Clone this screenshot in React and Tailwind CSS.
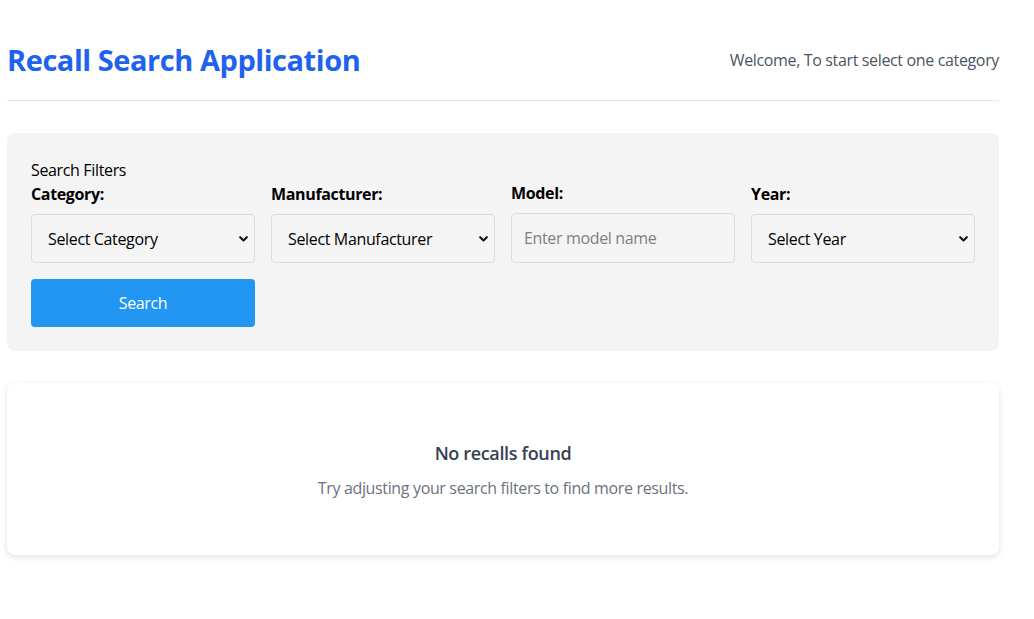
import { useState } from "react";

const Chevron = () => (
  <svg
    className="pointer-events-none absolute right-[7px] top-1/2 -translate-y-1/2"
    width="9"
    height="6"
    viewBox="0 0 9 6"
    fill="none"
  >
    <path d="M1.2 1.2L4.5 4.5L7.8 1.2" stroke="#111" strokeWidth="2.1" strokeLinecap="round" strokeLinejoin="round" />
  </svg>
);

const SelectField = ({ label, placeholder, options = [], value, onChange }) => (
  <div className="flex flex-col">
    <label className="font-bold text-base leading-6 text-black">{label}</label>
    <div className="relative mt-2">
      <select
        value={value}
        onChange={(e) => onChange(e.target.value)}
        className="w-full h-[49px] appearance-none rounded border border-[#dcdcdc] bg-[#f4f4f4] pl-4 pr-8 text-base tracking-[-0.35px] text-black outline-none"
      >
        <option value="">{placeholder}</option>
        {options.map((o) => (
          <option key={o} value={o}>{o}</option>
        ))}
      </select>
      <Chevron />
    </div>
  </div>
);

export default function App() {
  const [category, setCategory] = useState("");
  const [manufacturer, setManufacturer] = useState("");
  const [model, setModel] = useState("");
  const [year, setYear] = useState("");

  return (
    <div
      className="min-h-screen bg-white pl-[7px] text-black tracking-[-0.35px]"
      style={{ fontFamily: '"Open Sans", "Noto Sans", Arial, sans-serif' }}
    >
      <div className="w-[992px]">
        {/* header */}
        <header className="mt-5 flex items-center justify-between border-b border-[#e5e5e5] py-[22px]">
          <h1 className="text-[29px] leading-9 font-bold tracking-[-0.45px] text-[#1f62ee]">Recall Search Application</h1>
          <span className="text-base text-[#4b5563]">Welcome, To start select one category</span>
        </header>

        {/* filters */}
        <section className="mt-8 rounded-lg bg-[#f4f4f4] px-6 pt-[25px] pb-6">
          <div className="text-base leading-6">Search Filters</div>
          <div className="grid grid-cols-4 gap-x-4">
            <SelectField
              label="Category:"
              placeholder="Select Category"
              options={["Vehicles", "Tires", "Equipment", "Child Seats"]}
              value={category}
              onChange={setCategory}
            />
            <SelectField
              label="Manufacturer:"
              placeholder="Select Manufacturer"
              options={["Ford", "Toyota", "Honda"]}
              value={manufacturer}
              onChange={setManufacturer}
            />
            <div className="flex flex-col -mt-px">
              <label className="font-bold text-base leading-6">Model:</label>
              <input
                value={model}
                onChange={(e) => setModel(e.target.value)}
                placeholder="Enter model name"
                className="mt-2 h-[50px] rounded border border-[#dcdcdc] bg-[#f4f4f4] px-3 text-base tracking-[-0.35px] outline-none placeholder:text-[#808080]"
              />
            </div>
            <SelectField
              label="Year:"
              placeholder="Select Year"
              options={["2024", "2023", "2022", "2021"]}
              value={year}
              onChange={setYear}
            />
          </div>
          <div className="mt-4 grid grid-cols-4 gap-x-4">
            <button className="h-12 rounded bg-[#2196f3] text-base tracking-[-0.35px] text-white">Search</button>
          </div>
        </section>

        {/* results */}
        <section className="mt-8 flex h-[172px] flex-col items-center justify-center rounded-lg bg-white shadow-[0_2px_6px_rgba(0,0,0,0.12)]">
          <h3 className="text-lg leading-7 font-semibold text-[#374151]">No recalls found</h3>
          <p className="mt-[9px] text-base leading-6 text-[#6b7280]">Try adjusting your search filters to find more results.</p>
        </section>
      </div>
    </div>
  );
}
